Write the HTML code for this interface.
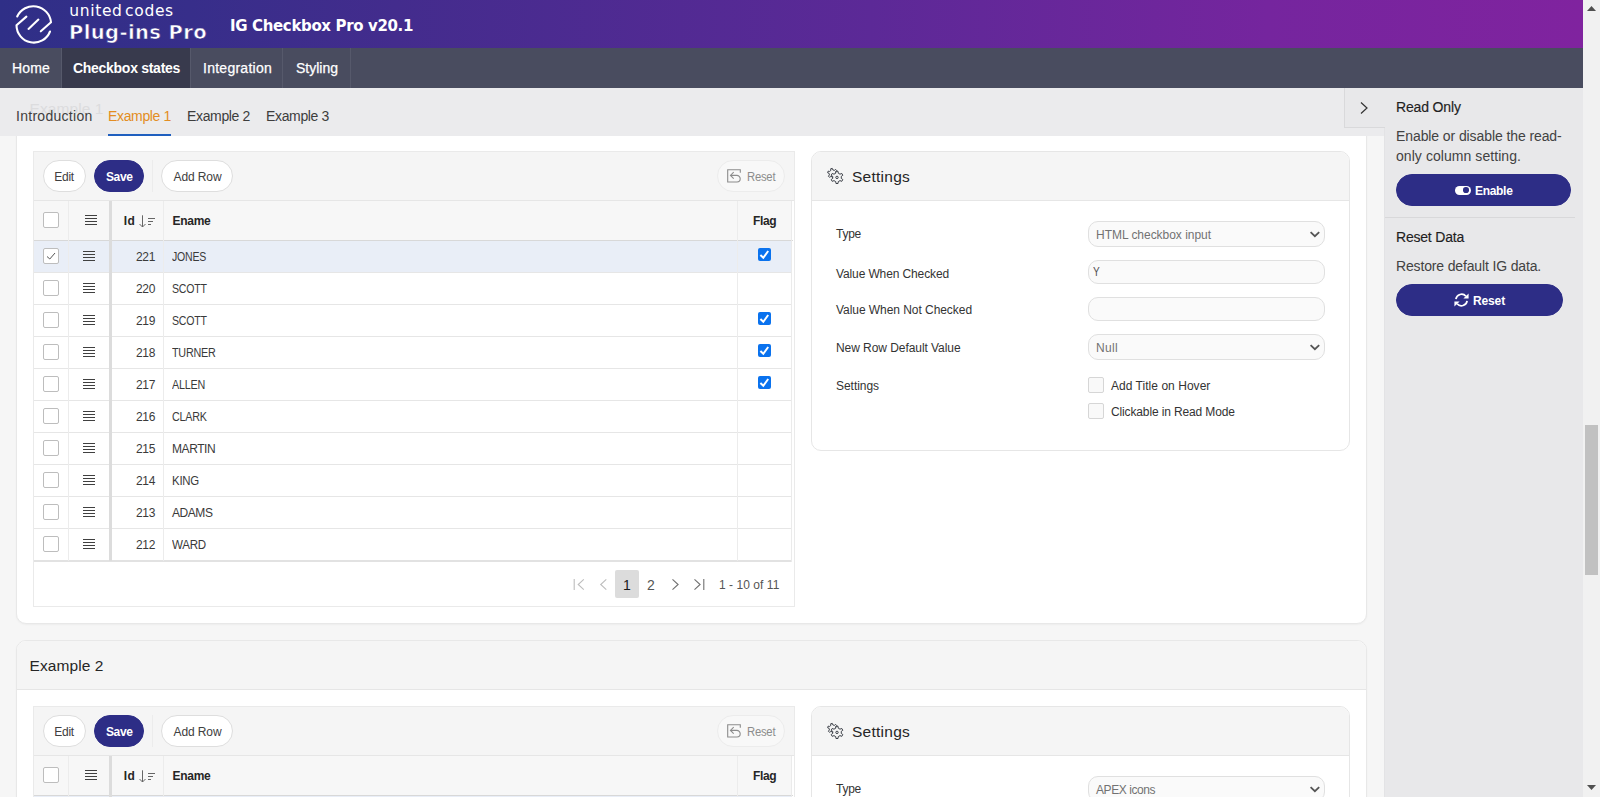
<!DOCTYPE html>
<html lang="en"><head><meta charset="utf-8"><title>IG Checkbox Pro v20.1</title>
<style>
*{box-sizing:border-box;margin:0;padding:0}
html,body{width:1600px;height:797px;overflow:hidden;background:#f6f6f6;font-family:"Liberation Sans",sans-serif;color:#333}
#app{position:relative;width:1600px;height:797px;overflow:hidden}
.abs,.tx,.bx{position:absolute}
.tx{white-space:nowrap}
#hdr{left:0;top:0;width:1583px;height:48px;background:linear-gradient(90deg,#2f2f87 0%,#372e8a 12%,#432c8d 25%,#5c2997 55%,#75259e 80%,#80239f 100%)}
#nav{left:0;top:48px;width:1583px;height:40px;background:#494c5f}
#nav .t{position:absolute;top:0;height:40px;border-right:1px solid #56596b}
#nav .t.on{background:#383a4d}
#tabs{left:0;top:88px;width:1384px;height:48px;background:#ebebed}
#side{left:1384px;top:88px;width:199px;height:709px;background:#e8e8ea;border-left:1px solid #e3e3e5}
#sb{left:1583px;top:0;width:17px;height:797px;background:#f1f1f1}
.region{background:#fff;border:1px solid #e8e8e8;box-shadow:0 1px 2px rgba(0,0,0,.04)}
.btn{position:absolute;height:32px;border-radius:16px;border:1px solid #dedede;background:#fff}
.btn.hot{background:#2d2d86;border-color:#2d2d86}
.btn.dis{background:#f8f8f8;border-color:#ececec}
.cb{position:absolute;width:16px;height:16px;border:1px solid #bdbdbd;border-radius:2px;background:#fff}
.ham{position:absolute;width:12px;height:10px;background:linear-gradient(#404040 0 1px,transparent 1px 3px,#404040 3px 4px,transparent 4px 6px,#404040 6px 7px,transparent 7px 9px,#404040 9px 10px)}
.hl{position:absolute;height:1px;background:#e6e6e6}
.vl{position:absolute;width:1px;background:#ececec}
.ncb{position:absolute;width:13px;height:13px;border-radius:2px;background:#0a72ee}
.inp{position:absolute;border:1px solid #e0e0e0;background:#fafafa;border-radius:10px}
svg{position:absolute;overflow:visible}
</style></head><body><div id="app">

<div class="bx region" style="left:16px;top:100px;width:1351px;height:524px;border-radius:0 0 10px 10px"></div>
<div class="bx" style="left:33px;top:151px;width:762px;height:456px;background:#fff;border:1px solid #eaeaea"></div>
<div class="bx" style="left:34px;top:152px;width:760px;height:49px;background:#f5f5f5;border-bottom:1px solid #e6e6e6"></div>
<div class="btn " style="left:43px;top:160px;width:43px"></div>
<div class="btn hot" style="left:94px;top:160px;width:50px"></div>
<div class="btn " style="left:161px;top:160px;width:72px"></div>
<div class="btn dis" style="left:717px;top:160px;width:68px"></div>
<div class="tx" style="left:54.3px;top:168px;height:18px;line-height:18px;font-size:12px;color:#404040;letter-spacing:-0.294px;">Edit</div>
<div class="tx" style="left:106px;top:168px;height:18px;line-height:18px;font-size:12px;color:#fff;font-weight:bold;letter-spacing:-0.381px;">Save</div>
<div class="tx" style="left:173.5px;top:168px;height:18px;line-height:18px;font-size:12px;color:#404040;letter-spacing:-0.099px;">Add Row</div>
<div class="tx" style="left:746.8px;top:168px;height:18px;line-height:18px;font-size:12px;color:#8c8c8c;letter-spacing:-0.25px;transform:scaleX(0.9403);transform-origin:0 50%;">Reset</div>
<div class="vl" style="left:152px;top:160px;height:32px;background:#ececec"></div>
<svg style="left:727px;top:169px" width="14" height="14" viewBox="0 0 14 14" fill="none" stroke="#8c8c8c" stroke-width="1.1"><path d="M3.600 6.400H9.800A3.400 3.400 0 0 1 13.200 9.800A3.200 3.200 0 0 1 10 13H.700V.700H13.300V3.700"/><path d="M6.700 3.200L3.500 6.400L6.700 9.600"/></svg>
<div class="bx" style="left:34px;top:201px;width:758px;height:40px;background:#f7f7f7"></div>
<div class="bx" style="left:34px;top:240px;width:759px;height:1px;background:#d8d8d8"></div>
<div class="bx" style="left:34px;top:241px;width:757px;height:32px;background:#e9eef7"></div>
<div class="cb" style="left:43px;top:248px"></div>
<div class="ham" style="left:83px;top:251px"></div>
<div class="tx" style="left:112px;top:248px;height:18px;line-height:18px;font-size:12px;color:#3a3a3a;letter-spacing:-0.34px;width:43px;text-align:right;">221</div>
<div class="tx" style="left:172px;top:248px;height:18px;line-height:18px;font-size:12px;color:#3a3a3a;letter-spacing:-0.25px;transform:scaleX(0.8772);transform-origin:0 50%;">JONES</div>
<div class="ncb" style="left:758px;top:248px"></div>
<svg style="left:758px;top:248px" width="13" height="13" viewBox="0 0 13 13" fill="none" stroke="#fff" stroke-width="2"><path d="M2.400 7.100L5.300 9.800L10.200 3"/></svg>
<div class="hl" style="left:34px;top:272px;width:758px"></div>
<div class="cb" style="left:43px;top:280px"></div>
<div class="ham" style="left:83px;top:283px"></div>
<div class="tx" style="left:112px;top:280px;height:18px;line-height:18px;font-size:12px;color:#3a3a3a;letter-spacing:-0.34px;width:43px;text-align:right;">220</div>
<div class="tx" style="left:172px;top:280px;height:18px;line-height:18px;font-size:12px;color:#3a3a3a;letter-spacing:-0.25px;transform:scaleX(0.8804);transform-origin:0 50%;">SCOTT</div>
<div class="hl" style="left:34px;top:304px;width:758px"></div>
<div class="cb" style="left:43px;top:312px"></div>
<div class="ham" style="left:83px;top:315px"></div>
<div class="tx" style="left:112px;top:312px;height:18px;line-height:18px;font-size:12px;color:#3a3a3a;letter-spacing:-0.34px;width:43px;text-align:right;">219</div>
<div class="tx" style="left:172px;top:312px;height:18px;line-height:18px;font-size:12px;color:#3a3a3a;letter-spacing:-0.25px;transform:scaleX(0.8804);transform-origin:0 50%;">SCOTT</div>
<div class="ncb" style="left:758px;top:312px"></div>
<svg style="left:758px;top:312px" width="13" height="13" viewBox="0 0 13 13" fill="none" stroke="#fff" stroke-width="2"><path d="M2.400 7.100L5.300 9.800L10.200 3"/></svg>
<div class="hl" style="left:34px;top:336px;width:758px"></div>
<div class="cb" style="left:43px;top:344px"></div>
<div class="ham" style="left:83px;top:347px"></div>
<div class="tx" style="left:112px;top:344px;height:18px;line-height:18px;font-size:12px;color:#3a3a3a;letter-spacing:-0.34px;width:43px;text-align:right;">218</div>
<div class="tx" style="left:172px;top:344px;height:18px;line-height:18px;font-size:12px;color:#3a3a3a;letter-spacing:-0.25px;transform:scaleX(0.8990);transform-origin:0 50%;">TURNER</div>
<div class="ncb" style="left:758px;top:344px"></div>
<svg style="left:758px;top:344px" width="13" height="13" viewBox="0 0 13 13" fill="none" stroke="#fff" stroke-width="2"><path d="M2.400 7.100L5.300 9.800L10.200 3"/></svg>
<div class="hl" style="left:34px;top:368px;width:758px"></div>
<div class="cb" style="left:43px;top:376px"></div>
<div class="ham" style="left:83px;top:379px"></div>
<div class="tx" style="left:112px;top:376px;height:18px;line-height:18px;font-size:12px;color:#3a3a3a;letter-spacing:-0.34px;width:43px;text-align:right;">217</div>
<div class="tx" style="left:172px;top:376px;height:18px;line-height:18px;font-size:12px;color:#3a3a3a;letter-spacing:-0.25px;transform:scaleX(0.8974);transform-origin:0 50%;">ALLEN</div>
<div class="ncb" style="left:758px;top:376px"></div>
<svg style="left:758px;top:376px" width="13" height="13" viewBox="0 0 13 13" fill="none" stroke="#fff" stroke-width="2"><path d="M2.400 7.100L5.300 9.800L10.200 3"/></svg>
<div class="hl" style="left:34px;top:400px;width:758px"></div>
<div class="cb" style="left:43px;top:408px"></div>
<div class="ham" style="left:83px;top:411px"></div>
<div class="tx" style="left:112px;top:408px;height:18px;line-height:18px;font-size:12px;color:#3a3a3a;letter-spacing:-0.34px;width:43px;text-align:right;">216</div>
<div class="tx" style="left:172px;top:408px;height:18px;line-height:18px;font-size:12px;color:#3a3a3a;letter-spacing:-0.25px;transform:scaleX(0.8952);transform-origin:0 50%;">CLARK</div>
<div class="hl" style="left:34px;top:432px;width:758px"></div>
<div class="cb" style="left:43px;top:440px"></div>
<div class="ham" style="left:83px;top:443px"></div>
<div class="tx" style="left:112px;top:440px;height:18px;line-height:18px;font-size:12px;color:#3a3a3a;letter-spacing:-0.34px;width:43px;text-align:right;">215</div>
<div class="tx" style="left:172px;top:440px;height:18px;line-height:18px;font-size:12px;color:#3a3a3a;letter-spacing:-0.43px;">MARTIN</div>
<div class="hl" style="left:34px;top:464px;width:758px"></div>
<div class="cb" style="left:43px;top:472px"></div>
<div class="ham" style="left:83px;top:475px"></div>
<div class="tx" style="left:112px;top:472px;height:18px;line-height:18px;font-size:12px;color:#3a3a3a;letter-spacing:-0.34px;width:43px;text-align:right;">214</div>
<div class="tx" style="left:172px;top:472px;height:18px;line-height:18px;font-size:12px;color:#3a3a3a;letter-spacing:-0.25px;transform:scaleX(0.9528);transform-origin:0 50%;">KING</div>
<div class="hl" style="left:34px;top:496px;width:758px"></div>
<div class="cb" style="left:43px;top:504px"></div>
<div class="ham" style="left:83px;top:507px"></div>
<div class="tx" style="left:112px;top:504px;height:18px;line-height:18px;font-size:12px;color:#3a3a3a;letter-spacing:-0.34px;width:43px;text-align:right;">213</div>
<div class="tx" style="left:172px;top:504px;height:18px;line-height:18px;font-size:12px;color:#3a3a3a;letter-spacing:-0.435px;">ADAMS</div>
<div class="hl" style="left:34px;top:528px;width:758px"></div>
<div class="cb" style="left:43px;top:536px"></div>
<div class="ham" style="left:83px;top:539px"></div>
<div class="tx" style="left:112px;top:536px;height:18px;line-height:18px;font-size:12px;color:#3a3a3a;letter-spacing:-0.34px;width:43px;text-align:right;">212</div>
<div class="tx" style="left:172px;top:536px;height:18px;line-height:18px;font-size:12px;color:#3a3a3a;letter-spacing:-0.25px;transform:scaleX(0.9654);transform-origin:0 50%;">WARD</div>
<svg style="left:43px;top:248px" width="16" height="16" viewBox="0 0 16 16" fill="none" stroke="#555" stroke-width="1"><path d="M4 8.5L6.8 11L12 5"/></svg>
<div class="bx" style="left:34px;top:560px;width:758px;height:2px;background:#e2e2e2"></div>
<div class="cb" style="left:43px;top:212px"></div>
<div class="ham" style="left:85px;top:215px"></div>
<div class="tx" style="left:123.7px;top:212px;height:18px;line-height:18px;font-size:12px;color:#262626;font-weight:bold;letter-spacing:0.418px;">Id</div>
<div class="tx" style="left:172.5px;top:212px;height:18px;line-height:18px;font-size:12px;color:#262626;font-weight:bold;letter-spacing:-0.27px;">Ename</div>
<div class="tx" style="left:753px;top:212px;height:18px;line-height:18px;font-size:12px;color:#262626;font-weight:bold;letter-spacing:-0.341px;">Flag</div>
<svg style="left:139px;top:215px" width="18" height="13" viewBox="0 0 18 13" fill="none" stroke="#666" stroke-width="1"><path d="M3.500 .300V12M.500 9L3.500 12L6.500 9M9 3.500H16M9 6.500H14M9 9.500H12"/></svg>
<div class="vl" style="left:68px;top:201px;height:360px"></div>
<div class="vl" style="left:163px;top:201px;height:360px"></div>
<div class="vl" style="left:737px;top:201px;height:360px"></div>
<div class="bx" style="left:109px;top:201px;width:3px;height:360px;background:#dcdcdc"></div>
<div class="vl" style="left:791px;top:201px;height:361px;background:#ebebeb"></div>
<div class="bx" style="left:615px;top:570px;width:24px;height:28px;background:#dcdcdc;border-radius:2px"></div>
<div class="tx" style="left:615px;top:575.5px;height:18px;line-height:18px;font-size:14px;color:#1a1a1a;width:24px;text-align:center;">1</div>
<div class="tx" style="left:639px;top:575.5px;height:18px;line-height:18px;font-size:14px;color:#555;width:24px;text-align:center;">2</div>
<div class="tx" style="left:719px;top:576px;height:18px;line-height:18px;font-size:12px;color:#555;letter-spacing:0.049px;">1 - 10 of 11</div>
<svg style="left:573px;top:578.8px" width="12" height="11" viewBox="0 0 12 11" fill="none" stroke="#bdbdbd" stroke-width="1.1"><path d="M1.200 0V11M10.800 .300L5.200 5.500L10.800 10.700"/></svg>
<svg style="left:600px;top:578.8px" width="8" height="11" viewBox="0 0 8 11" fill="none" stroke="#bdbdbd" stroke-width="1.1"><path d="M6.300 .300L.700 5.500L6.300 10.700"/></svg>
<svg style="left:671.5px;top:578.8px" width="8" height="11" viewBox="0 0 8 11" fill="none" stroke="#707070" stroke-width="1.1"><path d="M.500 .300L6.100 5.500L.500 10.700"/></svg>
<svg style="left:693.5px;top:578.8px" width="12" height="11" viewBox="0 0 12 11" fill="none" stroke="#707070" stroke-width="1.1"><path d="M.500 .300L6.100 5.500L.500 10.700M9.800 0V11"/></svg>
<div class="bx" style="left:811px;top:151px;width:539px;height:300px;background:#fff;border:1px solid #e6e6e6;border-radius:10px;overflow:hidden"><div style="height:49px;background:#f5f5f5;border-bottom:1px solid #e6e6e6"></div></div>
<svg style="left:827.4px;top:168px" width="17" height="16" viewBox="0 0 17 16" stroke="#3c4048" stroke-width="1" stroke-linejoin="round"><path d="M9.10 5.42L10.56 6.06L10.06 7.65L8.50 7.36L7.33 8.44L7.51 10.02L5.88 10.39L5.36 8.89L3.83 8.42L2.55 9.36L1.42 8.14L2.45 6.93L2.10 5.38L0.64 4.74L1.14 3.15L2.70 3.44L3.87 2.36L3.69 0.78L5.32 0.41L5.84 1.91L7.37 2.38L8.65 1.44L9.78 2.66L8.75 3.87Z" fill="none"/><path d="M13.01 6.19L14.78 5.45L15.81 7.24L14.28 8.40L14.28 10.40L15.81 11.56L14.78 13.35L13.01 12.61L11.27 13.61L11.03 15.51L8.97 15.51L8.73 13.61L6.99 12.61L5.22 13.35L4.19 11.56L5.72 10.40L5.72 8.40L4.19 7.24L5.22 5.45L6.99 6.19L8.73 5.19L8.97 3.29L11.03 3.29L11.27 5.19Z" fill="#f5f5f5"/><circle cx="10" cy="9.4" r="1.2" fill="none"/></svg>
<div class="tx" style="left:852px;top:166px;height:22px;line-height:22px;font-size:15.5px;color:#262626;letter-spacing:0.25px;">Settings</div>
<div class="tx" style="left:836px;top:225px;height:18px;line-height:18px;font-size:12px;color:#333;letter-spacing:-0.253px;">Type</div>
<div class="tx" style="left:836px;top:265px;height:18px;line-height:18px;font-size:12px;color:#333;letter-spacing:-0.121px;">Value When Checked</div>
<div class="tx" style="left:836px;top:301px;height:18px;line-height:18px;font-size:12px;color:#333;letter-spacing:-0.054px;">Value When Not Checked</div>
<div class="tx" style="left:836px;top:339px;height:18px;line-height:18px;font-size:12px;color:#333;letter-spacing:-0.063px;">New Row Default Value</div>
<div class="tx" style="left:836px;top:377px;height:18px;line-height:18px;font-size:12px;color:#333;letter-spacing:-0.045px;">Settings</div>
<div class="inp" style="left:1088px;top:221px;width:237px;height:26px"></div>
<div class="tx" style="left:1096px;top:226px;height:18px;line-height:18px;font-size:12px;color:#727272;letter-spacing:-0.032px;">HTML checkbox input</div>
<svg style="left:1309px;top:231px" width="10" height="7" viewBox="0 0 10 7" fill="none" stroke="#555" stroke-width="1.8"><path d="M1.600 1.200L5.900 5.200L10.200 1.200"/></svg>
<div class="inp" style="left:1088px;top:260px;width:237px;height:24px"></div>
<div class="tx" style="left:1092.5px;top:263px;height:18px;line-height:18px;font-size:12px;color:#505050;letter-spacing:-0.25px;transform:scaleX(0.8382);transform-origin:0 50%;">Y</div>
<div class="inp" style="left:1088px;top:297px;width:237px;height:24px"></div>
<div class="inp" style="left:1088px;top:334px;width:237px;height:26px"></div>
<div class="tx" style="left:1096px;top:339px;height:18px;line-height:18px;font-size:12px;color:#727272;letter-spacing:0.332px;">Null</div>
<svg style="left:1309px;top:344px" width="10" height="7" viewBox="0 0 10 7" fill="none" stroke="#555" stroke-width="1.8"><path d="M1.600 1.200L5.900 5.200L10.200 1.200"/></svg>
<div class="cb" style="left:1088px;top:377px;background:#f9f9f9;border-color:#d6d6d6"></div>
<div class="tx" style="left:1111px;top:377px;height:18px;line-height:18px;font-size:12px;color:#333;letter-spacing:0.038px;">Add Title on Hover</div>
<div class="cb" style="left:1088px;top:403px;background:#f9f9f9;border-color:#d6d6d6"></div>
<div class="tx" style="left:1111px;top:403px;height:18px;line-height:18px;font-size:12px;color:#333;letter-spacing:-0.133px;">Clickable in Read Mode</div>
<div class="bx region" style="left:16px;top:640px;width:1351px;height:300px;border-radius:10px 10px 0 0;overflow:hidden"><div style="height:49px;background:#f5f5f5;border-bottom:1px solid #e6e6e6"></div></div>
<div class="tx" style="left:29.5px;top:655px;height:22px;line-height:22px;font-size:15.5px;color:#262626;letter-spacing:0.086px;">Example 2</div>
<div class="bx" style="left:33px;top:706px;width:762px;height:456px;background:#fff;border:1px solid #eaeaea"></div>
<div class="bx" style="left:34px;top:707px;width:760px;height:49px;background:#f5f5f5;border-bottom:1px solid #e6e6e6"></div>
<div class="btn " style="left:43px;top:715px;width:43px"></div>
<div class="btn hot" style="left:94px;top:715px;width:50px"></div>
<div class="btn " style="left:161px;top:715px;width:72px"></div>
<div class="btn dis" style="left:717px;top:715px;width:68px"></div>
<div class="tx" style="left:54.3px;top:723px;height:18px;line-height:18px;font-size:12px;color:#404040;letter-spacing:-0.294px;">Edit</div>
<div class="tx" style="left:106px;top:723px;height:18px;line-height:18px;font-size:12px;color:#fff;font-weight:bold;letter-spacing:-0.381px;">Save</div>
<div class="tx" style="left:173.5px;top:723px;height:18px;line-height:18px;font-size:12px;color:#404040;letter-spacing:-0.099px;">Add Row</div>
<div class="tx" style="left:746.8px;top:723px;height:18px;line-height:18px;font-size:12px;color:#8c8c8c;letter-spacing:-0.25px;transform:scaleX(0.9403);transform-origin:0 50%;">Reset</div>
<div class="vl" style="left:152px;top:715px;height:32px;background:#ececec"></div>
<svg style="left:727px;top:724px" width="14" height="14" viewBox="0 0 14 14" fill="none" stroke="#8c8c8c" stroke-width="1.1"><path d="M3.600 6.400H9.800A3.400 3.400 0 0 1 13.200 9.800A3.200 3.200 0 0 1 10 13H.700V.700H13.300V3.700"/><path d="M6.700 3.200L3.500 6.400L6.700 9.600"/></svg>
<div class="bx" style="left:34px;top:756px;width:758px;height:40px;background:#f7f7f7"></div>
<div class="bx" style="left:34px;top:795px;width:759px;height:1px;background:#d8d8d8"></div>
<div class="bx" style="left:34px;top:796px;width:757px;height:32px;background:#e9eef7"></div>
<div class="cb" style="left:43px;top:803px"></div>
<div class="ham" style="left:83px;top:806px"></div>
<div class="tx" style="left:112px;top:803px;height:18px;line-height:18px;font-size:12px;color:#3a3a3a;letter-spacing:-0.34px;width:43px;text-align:right;">221</div>
<div class="tx" style="left:172px;top:803px;height:18px;line-height:18px;font-size:12px;color:#3a3a3a;letter-spacing:-0.25px;transform:scaleX(0.8772);transform-origin:0 50%;">JONES</div>
<div class="ncb" style="left:758px;top:803px"></div>
<svg style="left:758px;top:803px" width="13" height="13" viewBox="0 0 13 13" fill="none" stroke="#fff" stroke-width="2"><path d="M2.400 7.100L5.300 9.800L10.200 3"/></svg>
<div class="hl" style="left:34px;top:827px;width:758px"></div>
<div class="cb" style="left:43px;top:835px"></div>
<div class="ham" style="left:83px;top:838px"></div>
<div class="tx" style="left:112px;top:835px;height:18px;line-height:18px;font-size:12px;color:#3a3a3a;letter-spacing:-0.34px;width:43px;text-align:right;">220</div>
<div class="tx" style="left:172px;top:835px;height:18px;line-height:18px;font-size:12px;color:#3a3a3a;letter-spacing:-0.25px;transform:scaleX(0.8804);transform-origin:0 50%;">SCOTT</div>
<div class="hl" style="left:34px;top:859px;width:758px"></div>
<div class="cb" style="left:43px;top:867px"></div>
<div class="ham" style="left:83px;top:870px"></div>
<div class="tx" style="left:112px;top:867px;height:18px;line-height:18px;font-size:12px;color:#3a3a3a;letter-spacing:-0.34px;width:43px;text-align:right;">219</div>
<div class="tx" style="left:172px;top:867px;height:18px;line-height:18px;font-size:12px;color:#3a3a3a;letter-spacing:-0.25px;transform:scaleX(0.8804);transform-origin:0 50%;">SCOTT</div>
<div class="ncb" style="left:758px;top:867px"></div>
<svg style="left:758px;top:867px" width="13" height="13" viewBox="0 0 13 13" fill="none" stroke="#fff" stroke-width="2"><path d="M2.400 7.100L5.300 9.800L10.200 3"/></svg>
<div class="hl" style="left:34px;top:891px;width:758px"></div>
<div class="cb" style="left:43px;top:899px"></div>
<div class="ham" style="left:83px;top:902px"></div>
<div class="tx" style="left:112px;top:899px;height:18px;line-height:18px;font-size:12px;color:#3a3a3a;letter-spacing:-0.34px;width:43px;text-align:right;">218</div>
<div class="tx" style="left:172px;top:899px;height:18px;line-height:18px;font-size:12px;color:#3a3a3a;letter-spacing:-0.25px;transform:scaleX(0.8990);transform-origin:0 50%;">TURNER</div>
<div class="ncb" style="left:758px;top:899px"></div>
<svg style="left:758px;top:899px" width="13" height="13" viewBox="0 0 13 13" fill="none" stroke="#fff" stroke-width="2"><path d="M2.400 7.100L5.300 9.800L10.200 3"/></svg>
<div class="hl" style="left:34px;top:923px;width:758px"></div>
<div class="cb" style="left:43px;top:931px"></div>
<div class="ham" style="left:83px;top:934px"></div>
<div class="tx" style="left:112px;top:931px;height:18px;line-height:18px;font-size:12px;color:#3a3a3a;letter-spacing:-0.34px;width:43px;text-align:right;">217</div>
<div class="tx" style="left:172px;top:931px;height:18px;line-height:18px;font-size:12px;color:#3a3a3a;letter-spacing:-0.25px;transform:scaleX(0.8974);transform-origin:0 50%;">ALLEN</div>
<div class="ncb" style="left:758px;top:931px"></div>
<svg style="left:758px;top:931px" width="13" height="13" viewBox="0 0 13 13" fill="none" stroke="#fff" stroke-width="2"><path d="M2.400 7.100L5.300 9.800L10.200 3"/></svg>
<div class="hl" style="left:34px;top:955px;width:758px"></div>
<div class="cb" style="left:43px;top:963px"></div>
<div class="ham" style="left:83px;top:966px"></div>
<div class="tx" style="left:112px;top:963px;height:18px;line-height:18px;font-size:12px;color:#3a3a3a;letter-spacing:-0.34px;width:43px;text-align:right;">216</div>
<div class="tx" style="left:172px;top:963px;height:18px;line-height:18px;font-size:12px;color:#3a3a3a;letter-spacing:-0.25px;transform:scaleX(0.8952);transform-origin:0 50%;">CLARK</div>
<div class="hl" style="left:34px;top:987px;width:758px"></div>
<div class="cb" style="left:43px;top:995px"></div>
<div class="ham" style="left:83px;top:998px"></div>
<div class="tx" style="left:112px;top:995px;height:18px;line-height:18px;font-size:12px;color:#3a3a3a;letter-spacing:-0.34px;width:43px;text-align:right;">215</div>
<div class="tx" style="left:172px;top:995px;height:18px;line-height:18px;font-size:12px;color:#3a3a3a;letter-spacing:-0.43px;">MARTIN</div>
<div class="hl" style="left:34px;top:1019px;width:758px"></div>
<div class="cb" style="left:43px;top:1027px"></div>
<div class="ham" style="left:83px;top:1030px"></div>
<div class="tx" style="left:112px;top:1027px;height:18px;line-height:18px;font-size:12px;color:#3a3a3a;letter-spacing:-0.34px;width:43px;text-align:right;">214</div>
<div class="tx" style="left:172px;top:1027px;height:18px;line-height:18px;font-size:12px;color:#3a3a3a;letter-spacing:-0.25px;transform:scaleX(0.9528);transform-origin:0 50%;">KING</div>
<div class="hl" style="left:34px;top:1051px;width:758px"></div>
<div class="cb" style="left:43px;top:1059px"></div>
<div class="ham" style="left:83px;top:1062px"></div>
<div class="tx" style="left:112px;top:1059px;height:18px;line-height:18px;font-size:12px;color:#3a3a3a;letter-spacing:-0.34px;width:43px;text-align:right;">213</div>
<div class="tx" style="left:172px;top:1059px;height:18px;line-height:18px;font-size:12px;color:#3a3a3a;letter-spacing:-0.435px;">ADAMS</div>
<div class="hl" style="left:34px;top:1083px;width:758px"></div>
<div class="cb" style="left:43px;top:1091px"></div>
<div class="ham" style="left:83px;top:1094px"></div>
<div class="tx" style="left:112px;top:1091px;height:18px;line-height:18px;font-size:12px;color:#3a3a3a;letter-spacing:-0.34px;width:43px;text-align:right;">212</div>
<div class="tx" style="left:172px;top:1091px;height:18px;line-height:18px;font-size:12px;color:#3a3a3a;letter-spacing:-0.25px;transform:scaleX(0.9654);transform-origin:0 50%;">WARD</div>
<svg style="left:43px;top:803px" width="16" height="16" viewBox="0 0 16 16" fill="none" stroke="#555" stroke-width="1"><path d="M4 8.5L6.8 11L12 5"/></svg>
<div class="bx" style="left:34px;top:1115px;width:758px;height:2px;background:#e2e2e2"></div>
<div class="cb" style="left:43px;top:767px"></div>
<div class="ham" style="left:85px;top:770px"></div>
<div class="tx" style="left:123.7px;top:767px;height:18px;line-height:18px;font-size:12px;color:#262626;font-weight:bold;letter-spacing:0.418px;">Id</div>
<div class="tx" style="left:172.5px;top:767px;height:18px;line-height:18px;font-size:12px;color:#262626;font-weight:bold;letter-spacing:-0.27px;">Ename</div>
<div class="tx" style="left:753px;top:767px;height:18px;line-height:18px;font-size:12px;color:#262626;font-weight:bold;letter-spacing:-0.341px;">Flag</div>
<svg style="left:139px;top:770px" width="18" height="13" viewBox="0 0 18 13" fill="none" stroke="#666" stroke-width="1"><path d="M3.500 .300V12M.500 9L3.500 12L6.500 9M9 3.500H16M9 6.500H14M9 9.500H12"/></svg>
<div class="vl" style="left:68px;top:756px;height:360px"></div>
<div class="vl" style="left:163px;top:756px;height:360px"></div>
<div class="vl" style="left:737px;top:756px;height:360px"></div>
<div class="bx" style="left:109px;top:756px;width:3px;height:360px;background:#dcdcdc"></div>
<div class="vl" style="left:791px;top:756px;height:361px;background:#ebebeb"></div>
<div class="bx" style="left:615px;top:1125px;width:24px;height:28px;background:#dcdcdc;border-radius:2px"></div>
<div class="tx" style="left:615px;top:1130.5px;height:18px;line-height:18px;font-size:14px;color:#1a1a1a;width:24px;text-align:center;">1</div>
<div class="tx" style="left:639px;top:1130.5px;height:18px;line-height:18px;font-size:14px;color:#555;width:24px;text-align:center;">2</div>
<div class="tx" style="left:719px;top:1131px;height:18px;line-height:18px;font-size:12px;color:#555;letter-spacing:0.049px;">1 - 10 of 11</div>
<svg style="left:573px;top:1133.8px" width="12" height="11" viewBox="0 0 12 11" fill="none" stroke="#bdbdbd" stroke-width="1.1"><path d="M1.200 0V11M10.800 .300L5.200 5.500L10.800 10.700"/></svg>
<svg style="left:600px;top:1133.8px" width="8" height="11" viewBox="0 0 8 11" fill="none" stroke="#bdbdbd" stroke-width="1.1"><path d="M6.300 .300L.700 5.500L6.300 10.700"/></svg>
<svg style="left:671.5px;top:1133.8px" width="8" height="11" viewBox="0 0 8 11" fill="none" stroke="#707070" stroke-width="1.1"><path d="M.500 .300L6.100 5.500L.500 10.700"/></svg>
<svg style="left:693.5px;top:1133.8px" width="12" height="11" viewBox="0 0 12 11" fill="none" stroke="#707070" stroke-width="1.1"><path d="M.500 .300L6.100 5.500L.500 10.700M9.800 0V11"/></svg>
<div class="bx" style="left:811px;top:706px;width:539px;height:300px;background:#fff;border:1px solid #e6e6e6;border-radius:10px;overflow:hidden"><div style="height:49px;background:#f5f5f5;border-bottom:1px solid #e6e6e6"></div></div>
<svg style="left:827.4px;top:723px" width="17" height="16" viewBox="0 0 17 16" stroke="#3c4048" stroke-width="1" stroke-linejoin="round"><path d="M9.10 5.42L10.56 6.06L10.06 7.65L8.50 7.36L7.33 8.44L7.51 10.02L5.88 10.39L5.36 8.89L3.83 8.42L2.55 9.36L1.42 8.14L2.45 6.93L2.10 5.38L0.64 4.74L1.14 3.15L2.70 3.44L3.87 2.36L3.69 0.78L5.32 0.41L5.84 1.91L7.37 2.38L8.65 1.44L9.78 2.66L8.75 3.87Z" fill="none"/><path d="M13.01 6.19L14.78 5.45L15.81 7.24L14.28 8.40L14.28 10.40L15.81 11.56L14.78 13.35L13.01 12.61L11.27 13.61L11.03 15.51L8.97 15.51L8.73 13.61L6.99 12.61L5.22 13.35L4.19 11.56L5.72 10.40L5.72 8.40L4.19 7.24L5.22 5.45L6.99 6.19L8.73 5.19L8.97 3.29L11.03 3.29L11.27 5.19Z" fill="#f5f5f5"/><circle cx="10" cy="9.4" r="1.2" fill="none"/></svg>
<div class="tx" style="left:852px;top:721px;height:22px;line-height:22px;font-size:15.5px;color:#262626;letter-spacing:0.25px;">Settings</div>
<div class="tx" style="left:836px;top:780px;height:18px;line-height:18px;font-size:12px;color:#333;letter-spacing:-0.253px;">Type</div>
<div class="tx" style="left:836px;top:820px;height:18px;line-height:18px;font-size:12px;color:#333;letter-spacing:-0.121px;">Value When Checked</div>
<div class="tx" style="left:836px;top:856px;height:18px;line-height:18px;font-size:12px;color:#333;letter-spacing:-0.054px;">Value When Not Checked</div>
<div class="tx" style="left:836px;top:894px;height:18px;line-height:18px;font-size:12px;color:#333;letter-spacing:-0.063px;">New Row Default Value</div>
<div class="tx" style="left:836px;top:932px;height:18px;line-height:18px;font-size:12px;color:#333;letter-spacing:-0.045px;">Settings</div>
<div class="inp" style="left:1088px;top:776px;width:237px;height:26px"></div>
<div class="tx" style="left:1096px;top:781px;height:18px;line-height:18px;font-size:12px;color:#727272;letter-spacing:-0.436px;">APEX icons</div>
<svg style="left:1309px;top:786px" width="10" height="7" viewBox="0 0 10 7" fill="none" stroke="#555" stroke-width="1.8"><path d="M1.600 1.200L5.900 5.200L10.200 1.200"/></svg>
<div class="inp" style="left:1088px;top:815px;width:237px;height:24px"></div>
<div class="tx" style="left:1092.5px;top:818px;height:18px;line-height:18px;font-size:12px;color:#505050;letter-spacing:-0.25px;transform:scaleX(0.8382);transform-origin:0 50%;">Y</div>
<div class="inp" style="left:1088px;top:852px;width:237px;height:24px"></div>
<div class="inp" style="left:1088px;top:889px;width:237px;height:26px"></div>
<div class="tx" style="left:1096px;top:894px;height:18px;line-height:18px;font-size:12px;color:#727272;letter-spacing:0.332px;">Null</div>
<svg style="left:1309px;top:899px" width="10" height="7" viewBox="0 0 10 7" fill="none" stroke="#555" stroke-width="1.8"><path d="M1.600 1.200L5.900 5.200L10.200 1.200"/></svg>
<div class="cb" style="left:1088px;top:932px;background:#f9f9f9;border-color:#d6d6d6"></div>
<div class="tx" style="left:1111px;top:932px;height:18px;line-height:18px;font-size:12px;color:#333;letter-spacing:0.038px;">Add Title on Hover</div>
<div class="cb" style="left:1088px;top:958px;background:#f9f9f9;border-color:#d6d6d6"></div>
<div class="tx" style="left:1111px;top:958px;height:18px;line-height:18px;font-size:12px;color:#333;letter-spacing:-0.133px;">Clickable in Read Mode</div>
<div id="hdr" class="abs"></div>
<svg style="left:0;top:0" width="64" height="48" viewBox="0 0 64 48" fill="none" stroke="#fff" stroke-width="2.1" stroke-linecap="round" stroke-linejoin="round"><path d="M17.200 16.500A17.760 17.760 0 0 1 51 22.300L40.800 31.300M50 31.500A17.330 17.330 0 0 1 16.500 25.300L26.400 16.600M28.500 28.900L38.400 19.600"/></svg>
<div class="tx" style="left:69.3px;top:1px;height:20px;line-height:20px;font-size:15.5px;color:#fff;letter-spacing:0.642px;font-family:'DejaVu Sans',sans-serif;word-spacing:-3px;">united codes</div>
<div class="tx" style="left:69px;top:21px;height:24px;line-height:24px;font-size:19.5px;color:#fff;font-weight:bold;letter-spacing:0.402px;font-family:'DejaVu Sans',sans-serif;-webkit-text-stroke:.6px #35308a;">Plug-ins Pro</div>
<div class="tx" style="left:230px;top:15px;height:22px;line-height:22px;font-size:15px;color:#fff;font-weight:bold;letter-spacing:-0.356px;font-family:'DejaVu Sans',sans-serif;">IG Checkbox Pro v20.1</div>
<div id="nav" class="abs"><div class="t" style="left:0;width:62px"></div><div class="t on" style="left:62px;width:129px"></div><div class="t" style="left:191px;width:92px"></div><div class="t" style="left:283px;width:68px"></div></div>
<div class="tx" style="left:12px;top:58px;height:20px;line-height:20px;font-size:14px;color:#fff;letter-spacing:0.164px;-webkit-text-stroke:.25px #fff;">Home</div>
<div class="tx" style="left:73px;top:58px;height:20px;line-height:20px;font-size:14px;color:#fff;font-weight:bold;letter-spacing:-0.284px;">Checkbox states</div>
<div class="tx" style="left:203px;top:58px;height:20px;line-height:20px;font-size:14px;color:#fff;letter-spacing:0.259px;-webkit-text-stroke:.25px #fff;">Integration</div>
<div class="tx" style="left:296px;top:58px;height:20px;line-height:20px;font-size:14px;color:#fff;letter-spacing:-0.003px;-webkit-text-stroke:.25px #fff;">Styling</div>
<div id="tabs" class="abs"></div>
<div class="tx" style="left:29.5px;top:98px;height:22px;line-height:22px;font-size:15.5px;color:#dcdcde;letter-spacing:0.086px;">Example 1</div>
<div class="tx" style="left:16px;top:106px;height:20px;line-height:20px;font-size:14px;color:#404040;letter-spacing:0.279px;">Introduction</div>
<div class="tx" style="left:108px;top:106px;height:20px;line-height:20px;font-size:14px;color:#e38d22;letter-spacing:-0.349px;">Example 1</div>
<div class="tx" style="left:187px;top:106px;height:20px;line-height:20px;font-size:14px;color:#3d3d3d;letter-spacing:-0.349px;">Example 2</div>
<div class="tx" style="left:266px;top:106px;height:20px;line-height:20px;font-size:14px;color:#3d3d3d;letter-spacing:-0.349px;">Example 3</div>
<div class="bx" style="left:108px;top:134px;width:63px;height:2px;background:#1f5fbf"></div>
<div id="side" class="abs"></div>
<div class="bx" style="left:1344px;top:88px;width:41px;height:40px;background:#e8e8ea;border-left:1px solid #d9d9db;border-bottom:1px solid #d9d9db"></div>
<svg style="left:1360px;top:102px" width="8" height="12" viewBox="0 0 8 12" fill="none" stroke="#333" stroke-width="1.2"><path d="M1 .5L7 6L1 11.5"/></svg>
<div class="tx" style="left:1396px;top:97px;height:20px;line-height:20px;font-size:14px;color:#1f1f1f;letter-spacing:-0.149px;-webkit-text-stroke:.15px #1f1f1f;">Read Only</div>
<div class="tx" style="left:1396px;top:126px;height:20px;line-height:20px;font-size:14px;color:#424242;letter-spacing:-0.092px;">Enable or disable the read-</div>
<div class="tx" style="left:1396px;top:146px;height:20px;line-height:20px;font-size:14px;color:#424242;letter-spacing:0.064px;">only column setting.</div>
<div class="btn hot" style="left:1396px;top:174px;width:175px"></div>
<div class="bx" style="left:1454.500px;top:185.500px;width:16.500px;height:9px;border-radius:4.500px;background:#fff"></div><div class="bx" style="left:1463.400px;top:187.200px;width:5.600px;height:5.600px;border-radius:2.800px;background:#2d2d86"></div>
<div class="tx" style="left:1475px;top:182px;height:18px;line-height:18px;font-size:12px;color:#fff;font-weight:bold;letter-spacing:-0.307px;">Enable</div>
<div class="hl" style="left:1385px;top:217px;width:190px;background:#d8d8da"></div>
<div class="tx" style="left:1396px;top:227px;height:20px;line-height:20px;font-size:14px;color:#1f1f1f;letter-spacing:-0.203px;-webkit-text-stroke:.15px #1f1f1f;">Reset Data</div>
<div class="tx" style="left:1396px;top:256px;height:20px;line-height:20px;font-size:14px;color:#424242;letter-spacing:-0.151px;">Restore default IG data.</div>
<div class="btn hot" style="left:1396px;top:284px;width:167px"></div>
<svg style="left:1454.400px;top:293px" width="15" height="14" viewBox="0 0 15 14" fill="none" stroke="#fff" stroke-width="1.7"><path d="M1.900 6.200A5.700 5.700 0 0 1 11.900 3.300M13.100 7.800A5.700 5.700 0 0 1 3.100 10.700"/><path d="M14.600 .400V5.600H9.400zM.400 13.600V8.400H5.600z" fill="#fff" stroke="none"/></svg>
<div class="tx" style="left:1473px;top:292px;height:18px;line-height:18px;font-size:12px;color:#fff;font-weight:bold;letter-spacing:-0.136px;">Reset</div>
<div id="sb" class="abs"></div>
<div class="bx" style="left:1585px;top:425px;width:13px;height:150px;background:#c1c1c1"></div>
<svg style="left:1587px;top:6px" width="9" height="5" viewBox="0 0 9 5"><path d="M0 5L4.500 0L9 5z" fill="#505050"/></svg>
<svg style="left:1587px;top:785px" width="9" height="5" viewBox="0 0 9 5"><path d="M0 0L4.500 5L9 0z" fill="#505050"/></svg>
</div></body></html>
